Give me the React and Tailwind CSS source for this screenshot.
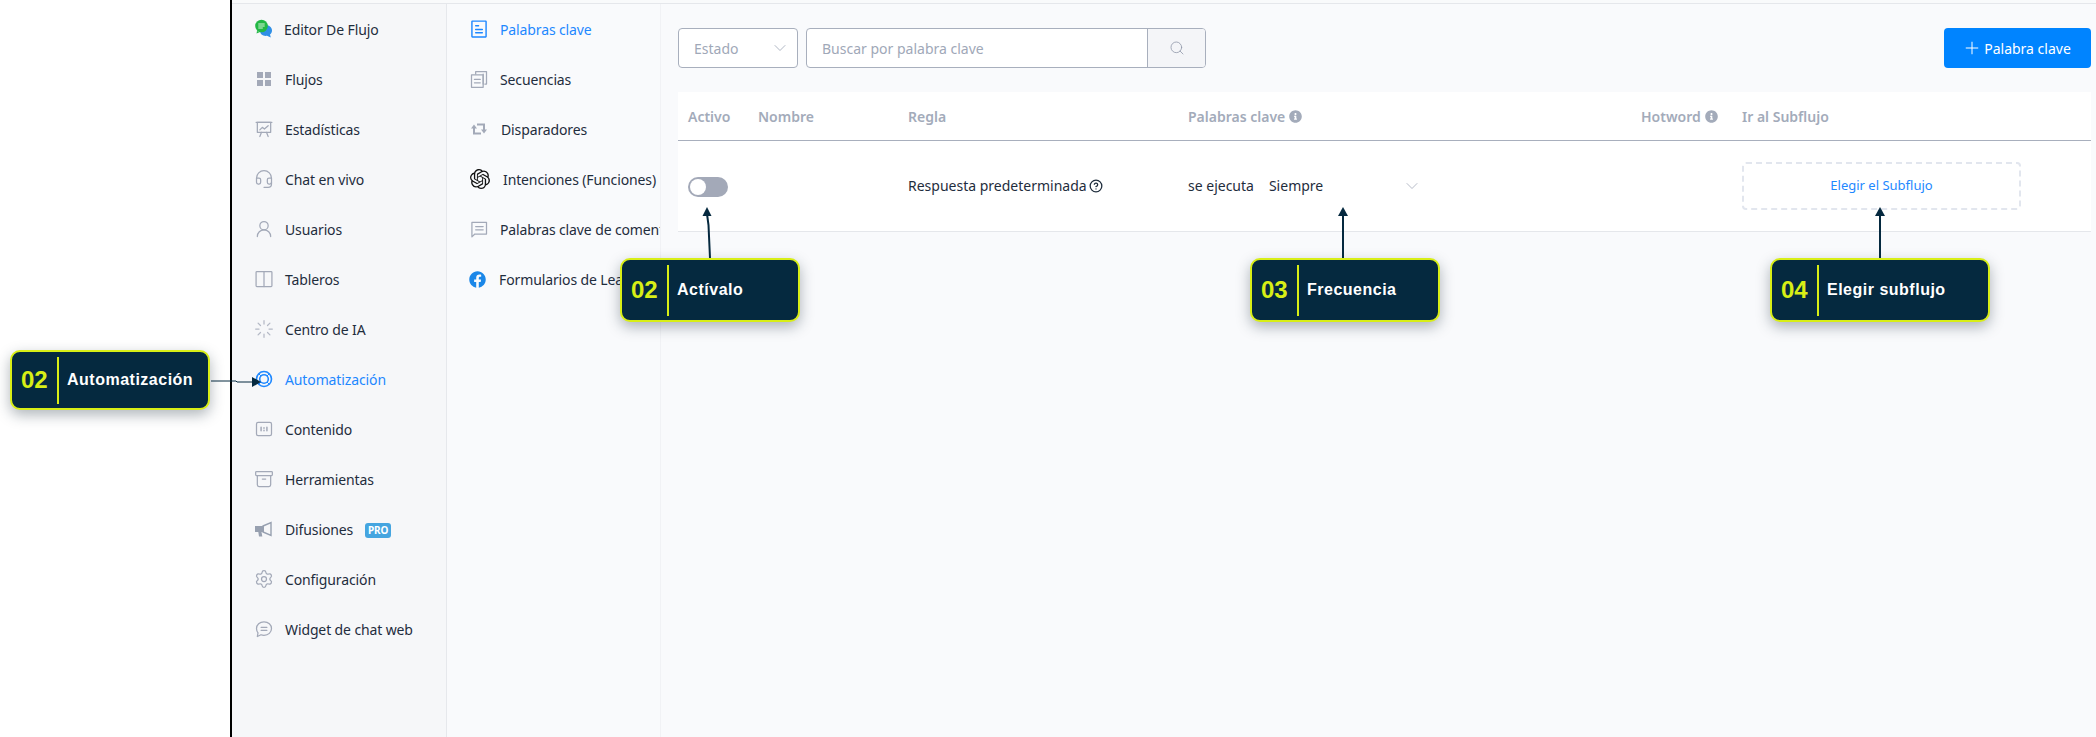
import React from "react";
import { Headset, UserRound, Loader, Archive, Settings, ChevronDown, Search, Plus, CircleHelp } from "lucide-react";
import { FaInfoCircle, FaFacebook } from "react-icons/fa";
import { SiOpenai } from "react-icons/si";

const G = "#a3a9b8";
const Svg = ({ children, c = G, s = 1.5, size = 20 }) => (
  <svg width={size} height={size} viewBox="0 0 24 24" fill="none" stroke={c} strokeWidth={s} strokeLinecap="round" strokeLinejoin="round">{children}</svg>
);

const Bubbles = () => (
  <svg width="20" height="20" viewBox="0 0 20 20">
    <path d="M11 6c4 0 7 2 7 5.500 0 1.700-.7 3-2 4l.8 3-3.800-1.700c-4 .6-7-1.600-7-5C6 8 7 6 11 6z" fill="#2f8fe6" />
    <circle cx="7.500" cy="7" r="6.300" fill="#22b845" />
    <path d="M3 12l-.5 2.500L6 13z" fill="#22b845" />
    <path d="M4.300 5h6.400M4.300 7h6.400M4.300 9h4.500" stroke="#d6f5dc" strokeWidth="1" />
  </svg>
);
const Grid4 = () => (
  <svg width="20" height="20" viewBox="0 0 20 20" fill={G}>
    <rect x="3" y="3" width="6" height="6" /><rect x="11" y="3" width="6" height="6" /><rect x="3" y="11" width="6" height="6" /><rect x="11" y="11" width="6" height="6" />
  </svg>
);
const Stats = () => (
  <Svg><path d="M2.500 4h19" /><rect x="4" y="4" width="16" height="12" /><path d="M7 13l3-3 2.500 2L17 8" /><path d="M9 16l-2 5M15 16l2 5" /></Svg>
);
const Board = () => (
  <Svg><rect x="2.500" y="3" width="19" height="18" rx="1" /><path d="M12 3v18" /></Svg>
);
const Content = () => (
  <Svg><rect x="3" y="4" width="18" height="16" rx="2" /><path d="M8.500 10v4M15.500 10v4M12 10.500v.5M12 13.500v.5" strokeWidth="1.800" /></Svg>
);
const Auto = () => (
  <svg width="20" height="20" viewBox="0 0 20 20" fill="none" stroke="#1e88ff" strokeWidth="1.600">
    <circle cx="10" cy="10" r="7.500" />
    <circle cx="10" cy="10" r="4.300" />
    <path d="M5 5l2 2M15 5l-2 2M5 15l2-2M15 15l-2-2" strokeWidth="1" />
  </svg>
);
const Mega = () => (
  <svg width="20" height="20" viewBox="0 0 20 20">
    <path d="M1 7h8v6H7.500l.8 4.500H5L4.300 13H1z" fill="#97a0b0" />
    <path d="M9 7l8-3.500v13L9 13z" fill="#f6f7f9" stroke="#97a0b0" strokeWidth="1.400" />
    <path d="M9 7v6" stroke="#97a0b0" strokeWidth="2" />
  </svg>
);
const Widget = () => (
  <Svg><path d="M12 3.500c5.200 0 9 3.400 9 8s-3.800 8-9 8c-1.300 0-2.500-.2-3.600-.6L4 21l.8-4.300C3.700 15.300 3 13.500 3 11.500c0-4.600 3.800-8 9-8z" /><path d="M8.500 10h7M8.500 13.500h7" /></Svg>
);
const Doc = () => (
  <Svg c="#1e88ff" s={1.700}><rect x="3.500" y="2.500" width="17" height="19" rx="0.500" /><path d="M8 8h3.500M8 12.500h8M8 16.500h8" /></Svg>
);
const Seq = () => (
  <Svg><path d="M8 6V3h13v15h-2" /><path d="M17 6V18" /><rect x="3" y="7" width="14" height="15" /><path d="M6.500 12.500h7M6.500 16.500h7" /></Svg>
);
const Trigger = () => (
  <svg width="20" height="20" viewBox="0 0 20 20" fill={G}>
    <path d="M5 9v5.500h7" fill="none" stroke={G} strokeWidth="2" />
    <path d="M15 11V5.500H8" fill="none" stroke={G} strokeWidth="2" />
    <path d="M2 9.500l3-4 3 4z" />
    <path d="M12 10.500l3 4 3-4z" />
  </svg>
);
const Comment = () => (
  <Svg><path d="M3.500 4h17.500v14H7l-3.500 3.500z" /><path d="M8 9h9M8 13h9" /></Svg>
);

const I = (Icon, c, s = 1.5) => <Icon size={20} color={c} strokeWidth={s} />;

const nav1 = [
  { t: "Editor De Flujo", i: <Bubbles />, l: "ml-[10px]" },
  { t: "Flujos", i: <Grid4 /> },
  { t: "Estadísticas", i: <Stats /> },
  { t: "Chat en vivo", i: I(Headset, G) },
  { t: "Usuarios", i: I(UserRound, G) },
  { t: "Tableros", i: <Board /> },
  { t: "Centro de IA", i: I(Loader, "#b4b9c6") },
  { t: "Automatización", i: <Auto />, a: true },
  { t: "Contenido", i: <Content /> },
  { t: "Herramientas", i: I(Archive, G) },
  { t: "Difusiones", i: <Mega />, pro: true },
  { t: "Configuración", i: I(Settings, G) },
  { t: "Widget de chat web", i: <Widget /> },
];

const nav2 = [
  { t: "Palabras clave", i: <Doc />, a: true, w: "w-[20px]", l: "ml-[11px]" },
  { t: "Secuencias", i: <Seq />, w: "w-[20px]", l: "ml-[11px]" },
  { t: "Disparadores", i: <Trigger />, w: "w-[20px]", l: "ml-[12px]" },
  { t: "Intenciones (Funciones)", i: <SiOpenai size={20} color="#111" />, w: "w-[21px]", l: "ml-[13px]" },
  { t: "Palabras clave de comentarios", i: <Comment />, w: "w-[20px]", l: "ml-[11px]" },
  { t: "Formularios de Leads", i: <FaFacebook size={17} color="#1b87e8" />, w: "w-[17px]", l: "ml-[13px]" },
];

const Callout = ({ n, label, pos, div }) => (
  <div className={`absolute z-10 flex items-center rounded-[10px] border-2 border-[#d8ee16] bg-[#05293f] pl-[9px] font-['Liberation_Sans',sans-serif] shadow-[0_5px_14px_rgba(30,45,60,0.35)] ${pos}`}>
    <span className="w-[36px] text-[24px] leading-none font-bold text-[#d8ee16]">{n}</span>
    <span className={`w-[2px] bg-[#d8ee16] ${div}`} />
    <span className="ml-[8px] text-[16px] leading-none font-bold tracking-[0.5px] whitespace-nowrap text-white">{label}</span>
  </div>
);

const cols = "grid-cols-[80px_150px_280px_453px_101px_1fr]";

export default function App() {
  return (
    <div className="relative flex h-screen w-full overflow-hidden bg-white font-['Noto_Sans',sans-serif] text-[14px] text-[#1f2d3d]">
      <div className="w-[230px] shrink-0" />
      <div className="w-[2px] shrink-0 bg-black" />
      <div className="flex min-w-0 flex-1 flex-col">
        <div className="h-[4px] shrink-0 border-b border-[#e5e7eb] bg-[#f9fafb]" />
        <div className="flex min-h-0 flex-1">
          <aside className="w-[215px] shrink-0 border-r border-[#e6e8ec] bg-[#f6f7f9] pl-[22px] tracking-[-0.12px]">
            {nav1.map((x) => (
              <div key={x.t} className="flex h-[50px] items-center">
                <span className="flex w-[20px] justify-center">{x.i}</span>
                <span className={`${x.l || "ml-[11px]"} ${x.a ? "text-[#1e88ff]" : ""}`}>{x.t}</span>
                {x.pro && <span className="mt-[3px] ml-[12px] flex h-[15px] w-[26px] items-center justify-center rounded-[3px] bg-[#45a5e0] text-[10px] font-bold text-white">PRO</span>}
              </div>
            ))}
          </aside>
          <aside className="w-[214px] shrink-0 overflow-hidden border-r border-[#f1f2f5] bg-[#f9fafc] pl-[22px] tracking-[-0.12px]">
            {nav2.map((x) => (
              <div key={x.t} className="flex h-[50px] items-center whitespace-nowrap">
                <span className={`flex justify-center ${x.w}`}>{x.i}</span>
                <span className={`${x.l} ${x.a ? "text-[#1e88ff]" : ""}`}>{x.t}</span>
              </div>
            ))}
          </aside>
          <main className="min-w-0 flex-1 bg-[#f9fafc] pt-[24px] pr-[5px] pl-[17px]">
            <div className="flex h-[40px] items-stretch">
              <div className="flex w-[120px] items-center justify-between rounded-[4px] border border-[#a8afbd] bg-white pr-[7px] pl-[15px] text-[#a0a8b8]">
                <span>Estado</span>
                <ChevronDown size={20} color="#a0a8b8" strokeWidth={1} />
              </div>
              <div className="ml-[8px] flex w-[400px] overflow-hidden rounded-[4px] border border-[#a8afbd] bg-white">
                <div className="flex flex-1 items-center pl-[15px] text-[#a0a8b8]">Buscar por palabra clave</div>
                <div className="flex w-[58px] items-center justify-center border-l border-[#a8afbd] bg-[#f4f5f8]">
                  <Search size={16} color="#8f97a8" strokeWidth={1.2} />
                </div>
              </div>
              <button className="ml-auto flex w-[147px] items-center justify-center gap-[2px] rounded-[4px] bg-[#0084ff] pr-[2px] text-white">
                <Plus size={20} color="#fff" strokeWidth={1.2} />
                <span>Palabra clave</span>
              </button>
            </div>
            <div className="mt-[24px] bg-white">
              <div className={`grid h-[49px] items-center border-b border-[#a8afbd] font-semibold text-[#a3abba] ${cols}`}>
                <span className="pl-[10px]">Activo</span>
                <span>Nombre</span>
                <span>Regla</span>
                <span className="flex items-center gap-[4px]">Palabras clave <FaInfoCircle size={13} color="#a3abba" /></span>
                <span className="flex items-center gap-[4px]">Hotword <FaInfoCircle size={13} color="#a3abba" /></span>
                <span>Ir al Subflujo</span>
              </div>
              <div className={`grid h-[91px] items-center border-b border-[#e5e7eb] ${cols}`}>
                <div className="pl-[10px]">
                  <div className="mt-[2px] flex h-[20px] w-[40px] items-center rounded-full bg-[#a3a9b8] pl-[2px]">
                    <span className="h-[16px] w-[16px] rounded-full bg-white" />
                  </div>
                </div>
                <span />
                <span className="-mt-[1px] flex items-center gap-[2px]">Respuesta predeterminada <CircleHelp size={14} color="#1f2d3d" strokeWidth={2.2} /></span>
                <div className="-mt-[1px] flex items-center">
                  <span>se ejecuta</span>
                  <span className="ml-[15px] w-[133px]">Siempre</span>
                  <ChevronDown size={20} color="#a8afbd" strokeWidth={1} />
                </div>
                <span />
                <div className="flex h-[48px] w-[279px] items-center justify-center rounded-[4px] border-2 border-dashed border-[#e2e6ee] pb-[1px] text-[13px] text-[#1e88ff]">Elegir el Subflujo</div>
              </div>
            </div>
          </main>
        </div>
      </div>

      <Callout n="02" label="Automatización" pos="left-[10px] top-[350px] h-[60px] w-[200px]" div="h-[47px]" />
      <Callout n="02" label="Actívalo" pos="left-[620px] top-[258px] h-[64px] w-[180px]" div="h-[51px]" />
      <Callout n="03" label="Frecuencia" pos="left-[1250px] top-[258px] h-[64px] w-[190px]" div="h-[51px]" />
      <Callout n="04" label="Elegir subflujo" pos="left-[1770px] top-[258px] h-[64px] w-[220px]" div="h-[51px]" />

      <svg className="pointer-events-none absolute top-0 left-0 z-10" width="2096" height="737" fill="none">
        <path d="M710 258L708.500 225L707 214" stroke="#05293f" strokeWidth="2" />
        <path d="M707 207l-4.500 9h9z" fill="#05293f" />
        <path d="M1343 258V214" stroke="#05293f" strokeWidth="2" />
        <path d="M1343 207l-5 9h10z" fill="#05293f" />
        <path d="M1880 258V214" stroke="#05293f" strokeWidth="2" />
        <path d="M1880 207l-5 9h10z" fill="#05293f" />
        <path d="M211 381H236l1 1H254" stroke="#05293f" strokeWidth="1" />
        <path d="M261 382l-9-5v10z" fill="#05293f" />
      </svg>
    </div>
  );
}
